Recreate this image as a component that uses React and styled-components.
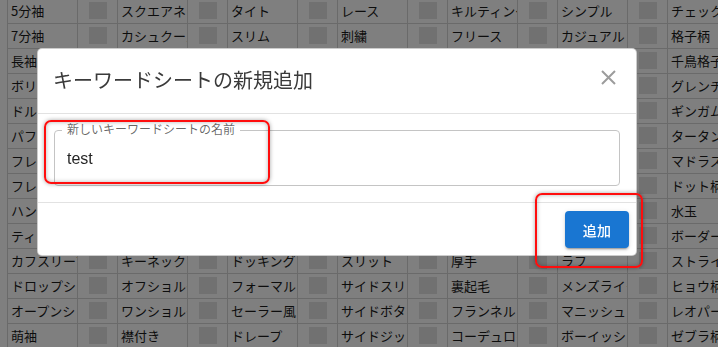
import React from 'react'
import styled, { createGlobalStyle } from 'styled-components'

const GlobalStyle = createGlobalStyle`
  html, body {
    margin: 0;
    padding: 0;
    background: #fff;
    overflow: hidden;
  }
  body {
    font-family: "Liberation Sans", "Noto Sans CJK JP", sans-serif;
  }
`;

const columns = [
    ['5分袖', '7分袖', '長袖', 'ボリュームスリーブ', 'ドルマンスリーブ', 'パフスリーブ', 'フレアスリーブ', 'フレンチスリーブ', 'ハンドスリーブ', 'ティアードスリーブ', 'カフスリーブ', 'ドロップショルダー', 'オープンショルダー', '萌袖'],
    ['スクエアネック', 'カシュクール', 'Vネック', 'Uネック', 'クルーネック', 'ボートネック', 'タートルネック', 'ハイネック', 'モックネック', 'ヘンリーネック', 'キーネック', 'オフショルダー', 'ワンショルダー', '襟付き'],
    ['タイト', 'スリム', 'ルーズ', 'オーバーサイズ', 'ワイド', 'ストレート', 'フレア', 'Aライン', 'ペプラム', 'マーメイド', 'ドッキング', 'フォーマル', 'セーラー風', 'ドレープ'],
    ['レース', '刺繍', 'フリル', 'プリーツ', 'リボン', 'ギャザー', 'タック', 'ボタン', 'ジップ', 'ベルト', 'スリット', 'サイドスリット', 'サイドボタン', 'サイドジップ'],
    ['キルティング', 'フリース', 'ニット', 'デニム', 'リネン', 'コットン', 'シルク', 'サテン', 'ウール', '薄手', '厚手', '裏起毛', 'フランネル', 'コーデュロイ'],
    ['シンプル', 'カジュアル', 'ガーリー', 'フェミニン', 'エレガント', 'モード', 'ストリート', 'ナチュラル', 'クール', 'キレイめ', 'ラフ', 'メンズライク', 'マニッシュ', 'ボーイッシュ'],
    ['チェック', '格子柄', '千鳥格子', 'グレンチェック', 'ギンガムチェック', 'タータンチェック', 'マドラスチェック', 'ドット柄', '水玉', 'ボーダー', 'ストライプ', 'ヒョウ柄', 'レオパード', 'ゼブラ柄'],
];

const Sheet = styled.div`
    display: grid;
    grid-template-columns: repeat(7, 69px 39px);
    grid-auto-rows: 24px;
    gap: 1px;
    padding: 1px;
    width: max-content;
    margin: -2px 0 0 7px;
    background: #d4d4d4;
`;

const TextCell = styled.div`
    background: #fff;
    padding: 0 3px;
    font-family: "Noto Sans CJK JP", sans-serif;
    font-size: 13px;
    line-height: 24px;
    color: #1a1a1a;
    white-space: nowrap;
    overflow: hidden;
`;

const BoxCell = styled.div`
    background: #fff;
    display: flex;
    align-items: center;
    justify-content: center;
`;

const Swatch = styled.span`
    width: 18px;
    height: 17px;
    margin-top: -2px;
    background: #e3e3e3;
`;

const Backdrop = styled.div`
    position: fixed;
    inset: 0;
    background: rgba(0, 0, 0, 0.5);
`;

const Stage = styled.div`
    position: absolute;
    left: 37px;
    top: 48px;
    width: 600px;
`;

const Dialog = styled.div`
    box-sizing: border-box;
    width: 600px;
    background: #fff;
    border: 1px solid rgba(0, 0, 0, 0.2);
    border-radius: 5px;
    overflow: hidden;
`;

const Header = styled.div`
    display: flex;
    align-items: flex-start;
    justify-content: space-between;
    padding: 16px 16px 16px 15px;
    border-bottom: 1px solid #e2e2e2;
`;

const Title = styled.h5`
    margin: 0;
    font-size: 20px;
    line-height: 32px;
    font-weight: 400;
    color: #3a3a3a;
`;

const CloseButton = styled.button`
    margin: 5px 4px 0 0;
    padding: 0;
    border: none;
    background: none;
    width: 15px;
    height: 15px;
    display: flex;
    cursor: pointer;
`;

const Body = styled.div`
    padding: 16px;
    border-bottom: 1px solid #e2e2e2;
`;

const Field = styled.div`
    position: relative;
    box-sizing: border-box;
    height: 56px;
    border: 1px solid #c4c4c4;
    border-radius: 4px;
    display: flex;
    align-items: center;
    padding: 0 12px;
`;

const FieldLabel = styled.label`
    position: absolute;
    top: -9px;
    left: 7px;
    padding: 0 5px;
    background: #fff;
    font-size: 12px;
    line-height: 17px;
    color: rgba(0, 0, 0, 0.6);
`;

const FieldValue = styled.span`
    font-size: 16px;
    line-height: 23px;
    color: rgba(0, 0, 0, 0.87);
`;

const Footer = styled.div`
    display: flex;
    justify-content: flex-end;
    padding: 8px 7px 7px 8px;
`;

const PrimaryButton = styled.button`
    height: 37px;
    min-width: 64px;
    padding: 0 16px;
    border: none;
    border-radius: 4px;
    background: #1976d2;
    color: #fff;
    font-family: inherit;
    font-size: 14px;
    font-weight: 500;
    letter-spacing: 0.02em;
    box-shadow: 0 3px 1px -2px rgba(0, 0, 0, 0.2), 0 2px 2px 0 rgba(0, 0, 0, 0.14), 0 1px 5px 0 rgba(0, 0, 0, 0.12);
    cursor: pointer;
`;

const Highlight = styled.div`
    position: absolute;
    box-sizing: border-box;
    left: ${p => p.$x}px;
    top: ${p => p.$y}px;
    width: ${p => p.$w}px;
    height: ${p => p.$h}px;
    border: 2.5px solid #ff0d0d;
    border-radius: 7px;
    box-shadow: 0 0 4px rgba(0, 0, 0, 0.35), inset 0 0 4px rgba(0, 0, 0, 0.3);
    pointer-events: none;
`;

function KeywordSheet() {
    const rows = columns[0].map((_, r) => r);
    return (
        <Sheet>
            {rows.map(r =>
                columns.map((col, c) => (
                    <React.Fragment key={`${r}-${c}`}>
                        <TextCell>{col[r]}</TextCell>
                        <BoxCell><Swatch /></BoxCell>
                    </React.Fragment>
                ))
            )}
        </Sheet>
    )
}

function AddSheetDialog() {
    return (
        <Backdrop>
            <Stage>
                <Dialog>
                    <Header>
                        <Title>キーワードシートの新規追加</Title>
                        <CloseButton aria-label="close">
                            <svg width="15" height="15" viewBox="0 0 15 15">
                                <path d="M1 1 L14 14 M14 1 L1 14" stroke="#9c9c9c" strokeWidth="2" />
                            </svg>
                        </CloseButton>
                    </Header>
                    <Body>
                        <Field>
                            <FieldLabel>新しいキーワードシートの名前</FieldLabel>
                            <FieldValue>test</FieldValue>
                        </Field>
                    </Body>
                    <Footer>
                        <PrimaryButton>追加</PrimaryButton>
                    </Footer>
                </Dialog>
                <Highlight $x={7} $y={72} $w={226} $h={64} />
                <Highlight $x={498} $y={145} $w={108} $h={75} />
            </Stage>
        </Backdrop>
    )
}

export default function App() {
    return (
        <>
            <GlobalStyle />
            <KeywordSheet />
            <AddSheetDialog />
        </>
    )
}
